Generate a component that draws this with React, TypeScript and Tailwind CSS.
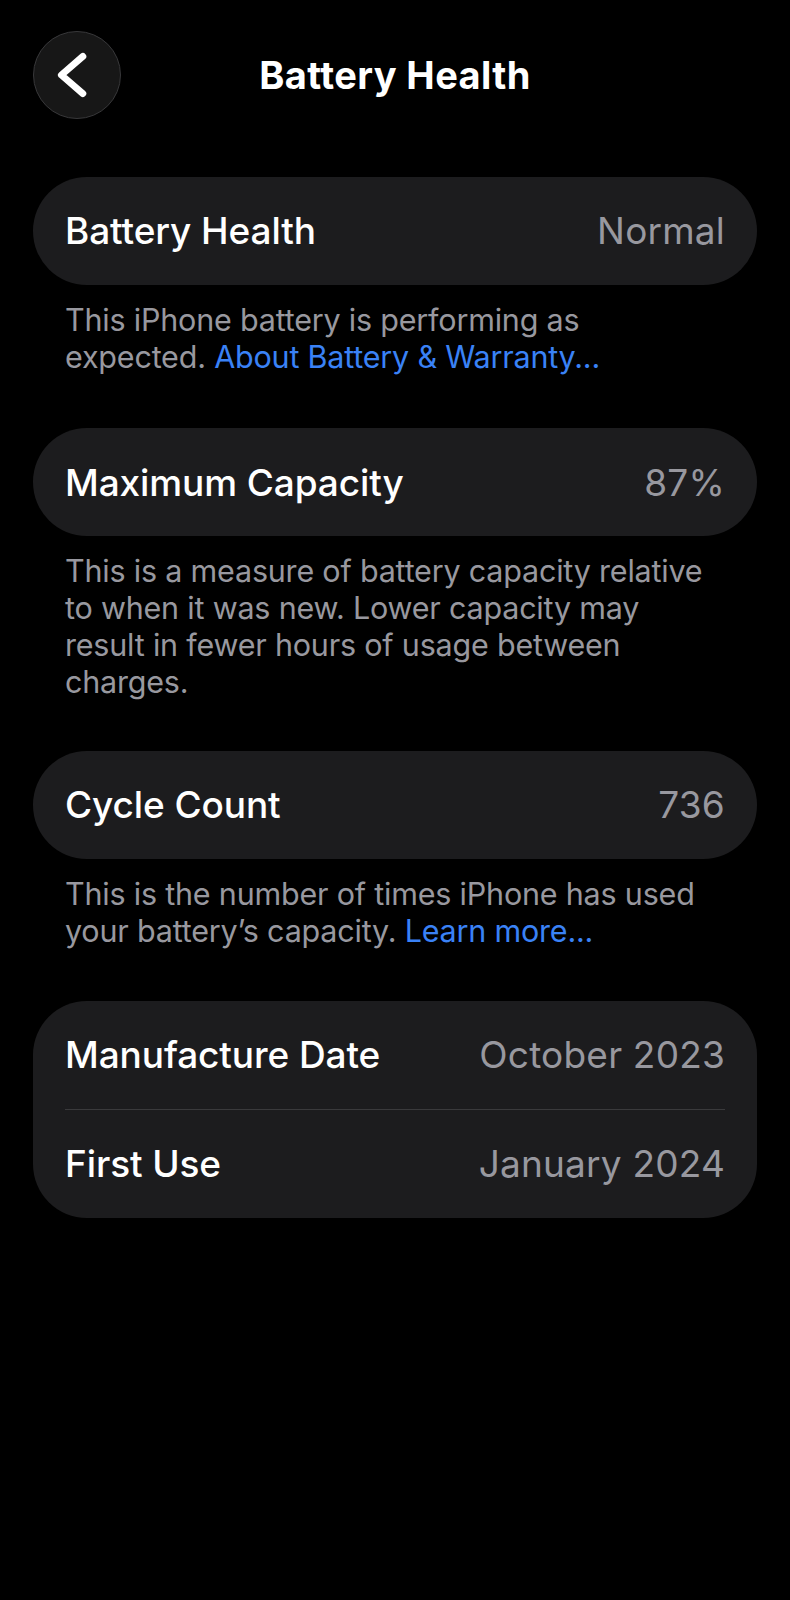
import React from 'react'

const font = { fontFamily: 'Inter, "Noto Sans", sans-serif' }

function Row({ label, value }: { label: string; value: string }) {
  return (
    <div className="flex items-center justify-between h-[108px] px-8">
      <span className="text-white text-[37px] font-medium tracking-[-0.1px]">{label}</span>
      <span className="text-[#98989f] text-[37px] tracking-[0.2px]">{value}</span>
    </div>
  )
}

export default function App() {
  return (
    <div className="bg-black min-h-[1600px] w-full px-[33px] pt-[31px]" style={font}>
      {/* header */}
      <div className="relative flex items-center justify-center h-[88px]">
        <button className="absolute left-0 top-0 w-[88px] h-[88px] rounded-full bg-[#171717] border border-[#38383a] flex items-center justify-center">
          <svg viewBox="0 0 88 88" className="w-[88px] h-[88px]">
            <path d="M50 25 L28 44 L50 63" fill="none" stroke="white" strokeWidth="7" strokeLinecap="round" strokeLinejoin="round" />
          </svg>
        </button>
        <h1 className="text-white text-[38px] font-bold tracking-[0.4px]">Battery Health</h1>
      </div>

      {/* battery health */}
      <div className="mt-[58px] rounded-full bg-[#1c1c1e]">
        <Row label="Battery Health" value="Normal" />
      </div>
      <p className="pl-8 pr-[42px] mt-[17px] text-[30.5px] leading-[36.7px] text-[#98989f] tracking-[-0.2px]">
        This iPhone battery is performing as expected.{' '}
        <span className="text-[#3a82f6]">About Battery &amp; Warranty...</span>
      </p>

      {/* maximum capacity */}
      <div className="mt-[53px] rounded-full bg-[#1c1c1e]">
        <Row label="Maximum Capacity" value="87%" />
      </div>
      <p className="pl-8 pr-[42px] mt-[17px] text-[30.5px] leading-[36.7px] text-[#98989f] tracking-[-0.2px]">
        This is a measure of battery capacity relative to when it was new. Lower capacity may result in fewer hours of usage between charges.
      </p>

      {/* cycle count */}
      <div className="mt-[51px] rounded-full bg-[#1c1c1e]">
        <Row label="Cycle Count" value="736" />
      </div>
      <p className="pl-8 pr-[42px] mt-[17px] text-[30.5px] leading-[36.7px] text-[#98989f] tracking-[-0.2px]">
        This is the number of times iPhone has used your battery’s capacity.{' '}
        <span className="text-[#3a82f6]">Learn more...</span>
      </p>

      {/* dates */}
      <div className="mt-[51px] rounded-[54px] bg-[#1c1c1e]">
        <Row label="Manufacture Date" value="October 2023" />
        <div className="mx-8 h-px bg-[#3a3a3c]" />
        <Row label="First Use" value="January 2024" />
      </div>
    </div>
  )
}
